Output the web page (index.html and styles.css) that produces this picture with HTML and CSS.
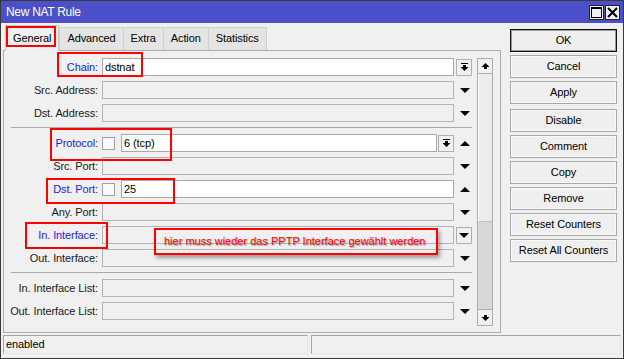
FILE: index.html
```html
<!DOCTYPE html>
<html>
<head>
    <meta charset="utf-8">
    <title>New NAT Rule</title>
    <link rel="stylesheet" href="styles.css">
</head>
<body>
    <div class="window">
        <div class="titlebar">
            <span class="title">New NAT Rule</span>
            <div class="winbtns">
                <span class="winbtn"><svg width="11" height="11" viewBox="0 0 11 11"><rect x="0.5" y="0.5" width="10" height="10" fill="none" stroke="#000"/><rect x="0" y="0" width="11" height="2" fill="#000"/></svg></span>
                <span class="winbtn"><svg width="11" height="11" viewBox="0 0 11 11"><path d="M1 1L10 10M10 1L1 10" stroke="#000" stroke-width="2"/></svg></span>
            </div>
        </div>

        <div class="main">
            <div class="left">
                <div class="tabs">
                    <span class="tab active">General</span>
                    <span class="tab">Advanced</span>
                    <span class="tab">Extra</span>
                    <span class="tab">Action</span>
                    <span class="tab">Statistics</span>
                </div>
                <div class="panel">
                    <div class="form">
                        <div class="row">
                            <span class="lbl blue">Chain:</span>
                            <div class="field"><div class="input white">dstnat</div></div>
                            <div class="tail"><span class="ddbtn"><svg width="9" height="9" viewBox="0 0 9 9"><rect x="1" y="0" width="7" height="1"/><rect x="3" y="2" width="3" height="2"/><path d="M0.5 4h8L4.5 8z"/></svg></span></div>
                        </div>
                        <div class="row">
                            <span class="lbl">Src. Address:</span>
                            <div class="field"><div class="input"></div></div>
                            <div class="tail down"></div>
                        </div>
                        <div class="row">
                            <span class="lbl">Dst. Address:</span>
                            <div class="field"><div class="input"></div></div>
                            <div class="tail down"></div>
                        </div>
                        <div class="sep"></div>
                        <div class="row">
                            <span class="lbl blue">Protocol:</span>
                            <div class="field">
                                <span class="check"></span>
                                <div class="input white">6 (tcp)</div>
                                <span class="ddbtn small"><svg width="9" height="9" viewBox="0 0 9 9"><rect x="1" y="0" width="7" height="1"/><rect x="3" y="2" width="3" height="2"/><path d="M0.5 4h8L4.5 8z"/></svg></span>
                            </div>
                            <div class="tail up"></div>
                        </div>
                        <div class="row">
                            <span class="lbl">Src. Port:</span>
                            <div class="field"><div class="input"></div></div>
                            <div class="tail down"></div>
                        </div>
                        <div class="row">
                            <span class="lbl blue">Dst. Port:</span>
                            <div class="field">
                                <span class="check"></span>
                                <div class="input white">25</div>
                            </div>
                            <div class="tail up"></div>
                        </div>
                        <div class="row">
                            <span class="lbl">Any. Port:</span>
                            <div class="field"><div class="input"></div></div>
                            <div class="tail down"></div>
                        </div>
                        <div class="row">
                            <span class="lbl blue">In. Interface:</span>
                            <div class="field"><div class="input"></div></div>
                            <div class="tail"><span class="ddbtn plain"></span></div>
                        </div>
                        <div class="row">
                            <span class="lbl">Out. Interface:</span>
                            <div class="field"><div class="input"></div></div>
                            <div class="tail down"></div>
                        </div>
                        <div class="sep"></div>
                        <div class="row">
                            <span class="lbl">In. Interface List:</span>
                            <div class="field"><div class="input"></div></div>
                            <div class="tail down"></div>
                        </div>
                        <div class="row">
                            <span class="lbl">Out. Interface List:</span>
                            <div class="field"><div class="input"></div></div>
                            <div class="tail down"></div>
                        </div>
                    </div>
                    <div class="scrollbar">
                        <div class="sb-btn"><svg width="9" height="9" viewBox="0 0 9 9"><path d="M0.5 5h8L4.5 1z"/><rect x="3" y="5" width="3" height="2"/></svg></div>
                        <div class="sb-thumb"></div>
                        <div class="sb-track"></div>
                        <div class="sb-btn bottom"><svg width="9" height="9" viewBox="0 0 9 9"><rect x="3" y="2" width="3" height="2"/><path d="M0.5 4h8L4.5 8z"/></svg></div>
                    </div>
                </div>
            </div>

            <div class="buttons">
                <div class="btn default">OK</div>
                <div class="btn">Cancel</div>
                <div class="btn">Apply</div>
                <div class="btn spaced">Disable</div>
                <div class="btn">Comment</div>
                <div class="btn">Copy</div>
                <div class="btn">Remove</div>
                <div class="btn">Reset Counters</div>
                <div class="btn">Reset All Counters</div>
            </div>
        </div>

        <div class="statusbar">
            <div class="status first">enabled</div>
            <div class="status second"></div>
        </div>

        <!-- red markings drawn over the dialog -->
        <div class="mark mark-general"></div>
        <div class="mark mark-chain"></div>
        <div class="mark mark-protocol"></div>
        <div class="mark mark-dstport"></div>
        <div class="mark mark-iniface"></div>
        <div class="mark note">hier muss wieder das PPTP Interface gewählt werden</div>
    </div>
</body>
</html>
```

FILE: styles.css
```css
body {
    margin: 0;
    font-family: "Liberation Sans", Arial, sans-serif;
    font-size: 11px;
    letter-spacing: -0.1px;
    color: #000;
    background-color: #fff;
}
.window {
    position: relative;
    width: 624px;
    height: 359px;
    box-sizing: border-box;
    border: 1px solid #3a3a3a;
    background-color: #f0f0f0;
}
.titlebar {
    height: 22px;
    background-color: #4c50c8;
    display: flex;
    align-items: center;
    justify-content: space-between;
    padding: 0 3px 0 5px;
}
.title {
    color: #fff;
    font-size: 12px;
    letter-spacing: -0.3px;
}
.winbtns {
    display: flex;
    gap: 1px;
}
.winbtn {
    width: 15px;
    height: 15px;
    box-sizing: border-box;
    border: 1px solid #222;
    background-color: #f0f0f0;
    display: flex;
    align-items: center;
    justify-content: center;
}
.main {
    display: flex;
    height: 310px;
}
.left {
    margin-left: 2px;
    width: 498px;
}
.tabs {
    display: flex;
    align-items: flex-end;
    height: 27px;
    padding-left: 2px;
}
.tab {
    height: 23px;
    box-sizing: border-box;
    padding: 0 7px;
    line-height: 21px;
    background-color: #e4e4e4;
    border: 1px solid #d0d0d0;
    border-bottom: none;
    margin-right: -1px;
}
.tab.active {
    height: 26px;
    line-height: 24px;
    background-color: #f0f0f0;
    border-color: #c8c8c8;
    position: relative;
    margin-bottom: -1px;
    margin-right: 0;
}
.panel {
    height: 283px;
    box-sizing: border-box;
    border: 1px solid #adadad;
    padding: 7px 6px 0 0;
    display: flex;
    align-items: flex-start;
}
.form {
    width: 473px;
}
.row {
    display: grid;
    grid-template-columns: 98px 352px 23px;
    height: 18px;
    margin-bottom: 5px;
    align-items: center;
}
.lbl {
    text-align: right;
    padding-right: 4px;
    white-space: nowrap;
    color: #1a1a1a;
}
.lbl.blue {
    color: #1c1ce0;
}
.field {
    display: flex;
    align-items: center;
    height: 18px;
}
.input {
    flex: 1;
    height: 18px;
    box-sizing: border-box;
    border: 1px solid #b4b4b4;
    padding-left: 2px;
    line-height: 16px;
    background-color: #f0f0f0;
}
.input.white {
    background-color: #fff;
    border-color: #a9a9a9;
}
.check {
    width: 13px;
    height: 13px;
    box-sizing: border-box;
    border: 1px solid #a0a0a0;
    background-color: #fafafa;
    margin-right: 6px;
}
.tail {
    height: 18px;
    display: flex;
    align-items: center;
}
.tail.down::after, .tail.up::after {
    content: "";
    margin-left: 6px;
    border-left: 5px solid transparent;
    border-right: 5px solid transparent;
}
.tail.down::after {
    border-top: 5px solid #000;
}
.tail.up::after {
    border-bottom: 5px solid #000;
}
.ddbtn {
    width: 16px;
    height: 17px;
    box-sizing: border-box;
    border: 1px solid #b0b0b0;
    background-color: #f0f0f0;
    display: flex;
    align-items: center;
    justify-content: center;
    margin-left: 2px;
}
.ddbtn.small {
    margin-left: 1px;
}
.ddbtn.plain::after {
    content: "";
    border-left: 5px solid transparent;
    border-right: 5px solid transparent;
    border-top: 5px solid #000;
}
.sep {
    height: 1px;
    background-color: #a8a8a8;
    margin: 2px 5px 6px 7px;
}
.scrollbar {
    width: 16px;
    height: 268px;
    box-sizing: border-box;
    border: 1px solid #adadad;
    display: flex;
    flex-direction: column;
    background-color: #d8d8d8;
}
.sb-btn {
    height: 14px;
    background-color: #f0f0f0;
    border-bottom: 1px solid #adadad;
    display: flex;
    align-items: center;
    justify-content: center;
}
.sb-btn.bottom {
    height: 15px;
    border-bottom: none;
    border-top: 1px solid #adadad;
}
.sb-thumb {
    height: 147px;
    background-color: #ececec;
    border-bottom: 1px solid #c0c0c0;
    border-left: 1px solid #fff;
}
.sb-track {
    flex: 1;
}
.buttons {
    margin-left: 9px;
    padding-top: 6px;
    width: 107px;
}
.btn {
    height: 23px;
    box-sizing: border-box;
    border: 1px solid #a8a8a8;
    box-shadow: inset 0 0 0 1px #f8f8f8;
    background-color: #efefef;
    text-align: center;
    line-height: 21px;
    margin-bottom: 3px;
}
.btn.default {
    border-color: #111;
    box-shadow: inset 0 0 0 1px #9a9a9a;
}
.btn.spaced {
    margin-top: 5px;
}
.statusbar {
    display: flex;
    gap: 3px;
    padding: 2px 0 0 2px;
}
.status {
    height: 19px;
    box-sizing: border-box;
    border: 1px solid;
    border-color: #a5a5a5 #e6e6e6 #e6e6e6 #a5a5a5;
    padding-left: 2px;
    line-height: 17px;
}
.status.first {
    width: 305px;
}
.status.second {
    width: 310px;
}
/* annotations */
.mark {
    position: absolute;
    box-sizing: border-box;
    border: 2px solid #f00;
}
.mark-general { left: 5px; top: 25px; width: 50px; height: 21px; }
.mark-chain { left: 56px; top: 51px; width: 86px; height: 25px; }
.mark-protocol { left: 49px; top: 127px; width: 122px; height: 33px; }
.mark-dstport { left: 45px; top: 177px; width: 129px; height: 26px; }
.mark-iniface { left: 24px; top: 221px; width: 83px; height: 27px; }
.note {
    left: 153px;
    top: 227px;
    width: 284px;
    height: 27px;
    padding-left: 8px;
    line-height: 23px;
    color: #f00;
    letter-spacing: 0;
    text-shadow: 1px 1px 1px rgba(0,0,0,0.35);
    box-shadow: 2px 3px 4px rgba(0,0,0,0.35);
}
```
